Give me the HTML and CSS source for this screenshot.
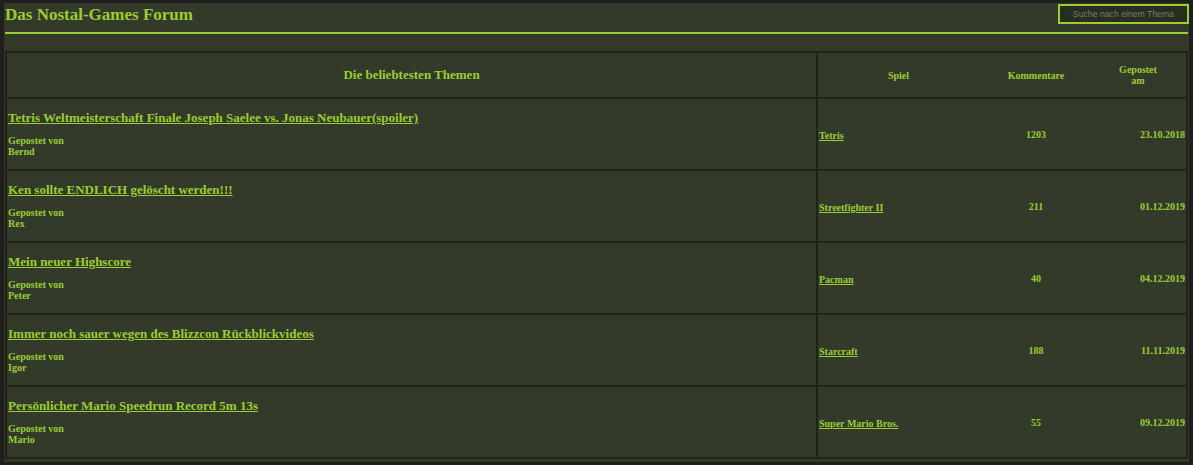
FILE: index.html
```html
<!DOCTYPE html>
<html lang="de">
<head>
<meta charset="utf-8">
<title>Das Nostal-Games Forum</title>
<link rel="stylesheet" href="styles.css">
</head>
<body>
<div class="page">
  <header class="top">
    <h1 class="title">Das Nostal-Games Forum</h1>
    <input class="search" type="text" placeholder="Suche nach einem Thema">
  </header>
  <table class="topics">
    <colgroup>
      <col class="c-topic"><col class="c-game"><col class="c-comments"><col class="c-date">
    </colgroup>
    <thead>
      <tr>
        <th class="h-topic">Die beliebtesten Themen</th>
        <th class="h-small">Spiel</th>
        <th class="h-small">Kommentare</th>
        <th class="h-small h-date">Gepostet<br>am</th>
      </tr>
    </thead>
    <tbody>
      <tr>
        <td class="topic"><a class="topic-link" href="#">Tetris Weltmeisterschaft Finale Joseph Saelee vs. Jonas Neubauer(spoiler)</a><div class="author">Gepostet von<br>Bernd</div></td>
        <td class="game"><a href="#">Tetris</a></td>
        <td class="count">1203</td>
        <td class="date">23.10.2018</td>
      </tr>
      <tr>
        <td class="topic"><a class="topic-link" href="#">Ken sollte ENDLICH gelöscht werden!!!</a><div class="author">Gepostet von<br>Rex</div></td>
        <td class="game"><a href="#">Streetfighter II</a></td>
        <td class="count">211</td>
        <td class="date">01.12.2019</td>
      </tr>
      <tr>
        <td class="topic"><a class="topic-link" href="#">Mein neuer Highscore</a><div class="author">Gepostet von<br>Peter</div></td>
        <td class="game"><a href="#">Pacman</a></td>
        <td class="count">40</td>
        <td class="date">04.12.2019</td>
      </tr>
      <tr>
        <td class="topic"><a class="topic-link" href="#">Immer noch sauer wegen des Blizzcon Rückblickvideos</a><div class="author">Gepostet von<br>Igor</div></td>
        <td class="game"><a href="#">Starcraft</a></td>
        <td class="count">188</td>
        <td class="date">11.11.2019</td>
      </tr>
      <tr>
        <td class="topic"><a class="topic-link" href="#">Persönlicher Mario Speedrun Record 5m 13s</a><div class="author">Gepostet von<br>Mario</div></td>
        <td class="game"><a href="#">Super Mario Bros.</a></td>
        <td class="count">55</td>
        <td class="date">09.12.2019</td>
      </tr>
    </tbody>
  </table>
</div>
</body>
</html>
```

FILE: styles.css
```css
html, body {
  margin: 0;
  padding: 0;
  background: #1f1f1d;
}
body {
  padding: 3px 4px 5px 4px;
  font-family: "Liberation Serif", "Times New Roman", serif;
  color: #9acd32;
}
.page {
  background: #333a2a;
  padding: 0 1px 3px 1px;
}
.top {
  display: flex;
  justify-content: space-between;
  align-items: flex-start;
  height: 29px;
  border-bottom: 2px solid #9acd32;
}
.title {
  margin: 0;
  padding-top: 2px;
  font-size: 17px;
  line-height: 20px;
  font-weight: bold;
}
.search {
  box-sizing: border-box;
  width: 131px;
  height: 20px;
  margin-top: 1px;
  margin-right: -1px;
  border: 2px solid #9acd32;
  background: #282d21;
  color: #ccc;
  font-family: "Liberation Sans", Arial, sans-serif;
  font-size: 8.7px;
  text-align: center;
  padding: 0 2px;
  outline: none;
}
.search::placeholder {
  color: #7a7c74;
}
.topics {
  width: 100%;
  margin: 17px 0 0 0;
  border-collapse: collapse;
  table-layout: fixed;
  border: 2px solid #1f2419;
}
.c-topic { width: 811px; }
.c-game { width: 162px; }
.c-comments { width: 114px; }
.c-date { width: auto; }
.topics th, .topics td {
  padding: 1px;
  font-weight: bold;
  vertical-align: middle;
}
.topics thead tr {
  height: 46px;
  border-bottom: 2px solid #1f2419;
}
.topics tbody tr {
  height: 72px;
  border-bottom: 2px solid #1f2419;
}
.topics tbody tr:last-child {
  border-bottom: none;
}
.topics th:first-child, .topics td:first-child {
  border-right: 2px solid #1f2419;
}
.h-topic {
  font-size: 13px;
  text-align: center;
}
.h-small {
  font-size: 10px;
  line-height: 11px;
  text-align: center;
}
.topics .h-date {
  padding-right: 4px;
}
.topics td.topic {
  padding-bottom: 4px;
}
.topic-link {
  display: inline-block;
  color: #9acd32;
  font-size: 13px;
  line-height: 15px;
  text-decoration: underline;
  margin-bottom: 10px;
}
.author {
  font-size: 10px;
  line-height: 11px;
}
.game a {
  color: #9acd32;
  font-size: 10px;
  text-decoration: underline;
}
.count {
  font-size: 10px;
  text-align: center;
}
.date {
  font-size: 10px;
  text-align: right;
}
```
